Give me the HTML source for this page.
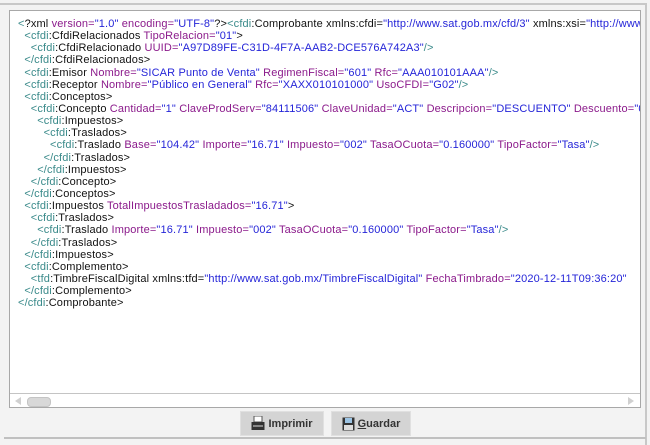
<!DOCTYPE html>
<html><head><meta charset="utf-8"><style>
html,body{margin:0;padding:0;width:650px;height:445px;overflow:hidden;background:#f3f3f3;font-family:"Liberation Sans",sans-serif}
.topline{position:absolute;left:0;top:3px;width:646px;height:2px;background:#c8c8c8}
.rline{position:absolute;left:645px;top:3px;width:2px;height:442px;background:#c8c8c8}
.botline{position:absolute;left:4px;top:437px;width:642px;height:2px;background:#c0c0c0}
.panel{position:absolute;left:9px;top:10px;width:630px;height:396px;border:1px solid #a8a8a8;background:#fff;overflow:hidden}
.code{position:absolute;left:8px;top:7px;font-size:11px;letter-spacing:0.15px;line-height:12.15px;white-space:nowrap;color:#111}
.l{height:12.15px}
.b{color:#3a8a8a}.a{color:#8b1a8b}.v{color:#2525d8}
.sb{position:absolute;left:0;top:382px;width:630px;height:14px;border-top:1px solid #c4c4c4;background:#fff}
.thumb{position:absolute;left:17px;top:3px;width:22px;height:8px;border-radius:4px;background:#d8d8d8;border:1px solid #c4c4c4}
.arl{position:absolute;left:5px;top:3px;width:0;height:0;border-top:4px solid transparent;border-bottom:4px solid transparent;border-right:6px solid #d0d0d0}
.arr{position:absolute;right:6px;top:3px;width:0;height:0;border-top:4px solid transparent;border-bottom:4px solid transparent;border-left:6px solid #d0d0d0}
.btn{position:absolute;top:411px;height:25px;background:#d4d4d4;border:1px solid #e0e0e0;box-sizing:border-box;font-size:11px;font-weight:bold;color:#333;display:flex;align-items:center;justify-content:center;gap:3px}
</style></head><body>
<div class="topline"></div><div class="rline"></div><div class="botline"></div>
<div class="panel">
<div class="code">
<div class="l"><span class="b">&lt;</span>?xml <span class="a">version=</span><span class="v">"1.0"</span> <span class="a">encoding=</span><span class="v">"UTF-8"</span>?&gt;<span class="b">&lt;cfdi</span>:Comprobante xmlns:cfdi=<span class="v">"http://www.sat.gob.mx/cfd/3"</span> xmlns:xsi=<span class="v">"http://www.w3.org/2001/XMLSchema-instance"</span></div>
<div class="l" style="padding-left:6.4px"><span class="b">&lt;cfdi</span>:CfdiRelacionados <span class="a">TipoRelacion=</span><span class="v">"01"</span>&gt;</div>
<div class="l" style="padding-left:12.8px"><span class="b">&lt;cfdi</span>:CfdiRelacionado <span class="a">UUID=</span><span class="v">"A97D89FE-C31D-4F7A-AAB2-DCE576A742A3"</span><span class="b">/&gt;</span></div>
<div class="l" style="padding-left:6.4px"><span class="b">&lt;/cfdi</span>:CfdiRelacionados&gt;</div>
<div class="l" style="padding-left:6.4px"><span class="b">&lt;cfdi</span>:Emisor <span class="a">Nombre=</span><span class="v">"SICAR Punto de Venta"</span> <span class="a">RegimenFiscal=</span><span class="v">"601"</span> <span class="a">Rfc=</span><span class="v">"AAA010101AAA"</span><span class="b">/&gt;</span></div>
<div class="l" style="padding-left:6.4px"><span class="b">&lt;cfdi</span>:Receptor <span class="a">Nombre=</span><span class="v">"Público en General"</span> <span class="a">Rfc=</span><span class="v">"XAXX010101000"</span> <span class="a">UsoCFDI=</span><span class="v">"G02"</span><span class="b">/&gt;</span></div>
<div class="l" style="padding-left:6.4px"><span class="b">&lt;cfdi</span>:Conceptos&gt;</div>
<div class="l" style="padding-left:12.8px"><span class="b">&lt;cfdi</span>:Concepto <span class="a">Cantidad=</span><span class="v">"1"</span> <span class="a">ClaveProdServ=</span><span class="v">"84111506"</span> <span class="a">ClaveUnidad=</span><span class="v">"ACT"</span> <span class="a">Descripcion=</span><span class="v">"DESCUENTO"</span> <span class="a">Descuento=</span><span class="v">"0"</span></div>
<div class="l" style="padding-left:19.2px"><span class="b">&lt;cfdi</span>:Impuestos&gt;</div>
<div class="l" style="padding-left:25.6px"><span class="b">&lt;cfdi</span>:Traslados&gt;</div>
<div class="l" style="padding-left:32px"><span class="b">&lt;cfdi</span>:Traslado <span class="a">Base=</span><span class="v">"104.42"</span> <span class="a">Importe=</span><span class="v">"16.71"</span> <span class="a">Impuesto=</span><span class="v">"002"</span> <span class="a">TasaOCuota=</span><span class="v">"0.160000"</span> <span class="a">TipoFactor=</span><span class="v">"Tasa"</span><span class="b">/&gt;</span></div>
<div class="l" style="padding-left:25.6px"><span class="b">&lt;/cfdi</span>:Traslados&gt;</div>
<div class="l" style="padding-left:19.2px"><span class="b">&lt;/cfdi</span>:Impuestos&gt;</div>
<div class="l" style="padding-left:12.8px"><span class="b">&lt;/cfdi</span>:Concepto&gt;</div>
<div class="l" style="padding-left:6.4px"><span class="b">&lt;/cfdi</span>:Conceptos&gt;</div>
<div class="l" style="padding-left:6.4px"><span class="b">&lt;cfdi</span>:Impuestos <span class="a">TotalImpuestosTrasladados=</span><span class="v">"16.71"</span>&gt;</div>
<div class="l" style="padding-left:12.8px"><span class="b">&lt;cfdi</span>:Traslados&gt;</div>
<div class="l" style="padding-left:19.2px"><span class="b">&lt;cfdi</span>:Traslado <span class="a">Importe=</span><span class="v">"16.71"</span> <span class="a">Impuesto=</span><span class="v">"002"</span> <span class="a">TasaOCuota=</span><span class="v">"0.160000"</span> <span class="a">TipoFactor=</span><span class="v">"Tasa"</span><span class="b">/&gt;</span></div>
<div class="l" style="padding-left:12.8px"><span class="b">&lt;/cfdi</span>:Traslados&gt;</div>
<div class="l" style="padding-left:6.4px"><span class="b">&lt;/cfdi</span>:Impuestos&gt;</div>
<div class="l" style="padding-left:6.4px"><span class="b">&lt;cfdi</span>:Complemento&gt;</div>
<div class="l" style="padding-left:12.8px"><span class="b">&lt;tfd</span>:TimbreFiscalDigital xmlns:tfd=<span class="v">"http://www.sat.gob.mx/TimbreFiscalDigital"</span> <span class="a">FechaTimbrado=</span><span class="v">"2020-12-11T09:36:20"</span></div>
<div class="l" style="padding-left:6.4px"><span class="b">&lt;/cfdi</span>:Complemento&gt;</div>
<div class="l"><span class="b">&lt;/cfdi</span>:Comprobante&gt;</div>
</div>
<div class="sb"><div class="arl"></div><div class="thumb"></div><div class="arr"></div></div>
</div>
<div class="btn" style="left:240px;width:84px">
<svg width="14" height="15" viewBox="0 0 14 15"><rect x="3" y="0" width="8" height="6" fill="#fff" stroke="#555"/><rect x="0.5" y="6" width="13" height="8" fill="#333"/><rect x="2" y="9" width="10" height="2" fill="#888"/></svg>Imprimir</div>
<div class="btn" style="left:331px;width:80px">
<svg width="13" height="14" viewBox="0 0 13 14"><rect x="0.5" y="0.5" width="12" height="13" fill="#333"/><rect x="3" y="1" width="7" height="5" fill="#9cc4e4"/><rect x="2" y="8" width="9" height="5" fill="#ddd"/></svg><span><u>G</u>uardar</span></div>
</body></html>
